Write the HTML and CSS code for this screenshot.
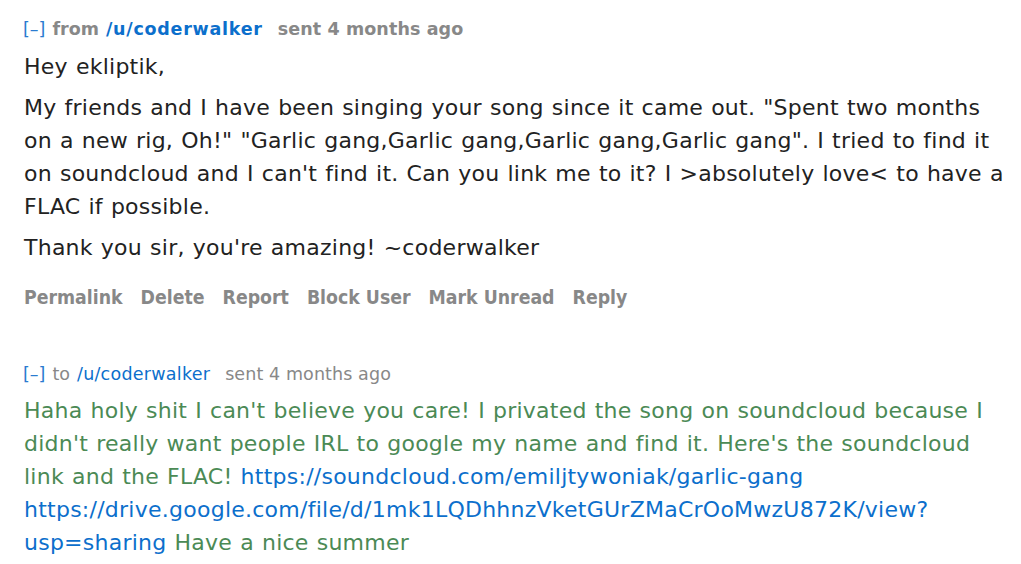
FILE: index.html
```html
<!DOCTYPE html>
<html>
<head>
<meta charset="utf-8">
<link rel="stylesheet" href="styles.css">
</head>
<body>
<div class="thread">
  <div class="message">
    <div class="tagline bold">
      <a class="expand">[–]</a>
      <span class="gray">from</span>
      <a class="author">/u/coderwalker</a>
      <span class="gray time">sent 4 months ago</span>
    </div>
    <div class="body">
      <p>Hey ekliptik,</p>
      <p>My friends and I have been singing your song since it came out. "Spent two months on a new rig, Oh!" "Garlic gang,Garlic gang,Garlic gang,Garlic gang". I tried to find it on soundcloud and I can't find it. Can you link me to it? I &gt;absolutely love&lt; to have a FLAC if possible.</p>
      <p>Thank you sir, you're amazing! ~coderwalker</p>
    </div>
    <ul class="actions">
      <li>Permalink</li>
      <li>Delete</li>
      <li>Report</li>
      <li>Block User</li>
      <li>Mark Unread</li>
      <li>Reply</li>
    </ul>
  </div>
  <div class="message sent">
    <div class="tagline">
      <a class="expand">[–]</a>
      <span class="gray">to</span>
      <a class="author">/u/coderwalker</a>
      <span class="gray time">sent 4 months ago</span>
    </div>
    <div class="body green">
      <p>Haha holy shit I can't believe you care! I privated the song on soundcloud because I didn't really want people IRL to google my name and find it. Here's the soundcloud link and the FLAC! <a>https://soundcloud.com/emiljtywoniak/garlic-gang</a> <a>https://drive.google.com/file/d/1mk1LQDhhnzVketGUrZMaCrOoMwzU872K/view?usp=sharing</a> Have a nice summer</p>
    </div>
  </div>
</div>
</body>
</html>
```
FILE: styles.css
```css
html, body {
  margin: 0;
  padding: 0;
  background: #ffffff;
}
body {
  font-family: "DejaVu Sans", Verdana, sans-serif;
  color: #222222;
}
.thread {
  padding: 17px 12px 0 23px;
}
.message.sent {
  margin-top: 52px;
}
.tagline {
  font-size: 17.5px;
  line-height: 24px;
  display: flex;
  align-items: baseline;
  gap: 7px;
}
.tagline .time {
  margin-left: 8px;
  letter-spacing: 0.1px;
}
.tagline.bold .gray,
.tagline.bold .author {
  font-weight: bold;
}
.tagline .author {
  letter-spacing: 0.25px;
}
.tagline.bold .author {
  letter-spacing: 0.75px;
}
.expand {
  color: #2a7bd0;
  font-weight: normal;
}
.author {
  color: #0c6fcc;
}
.gray {
  color: #888888;
}
.body {
  font-size: 22px;
  line-height: 33px;
  letter-spacing: 0.25px;
  word-spacing: 0.8px;
}
.body p {
  margin: 9px 0 0 1px;
}
.body p + p {
  margin-top: 8px;
}
.sent .body p {
  margin-top: 8px;
}
.body a {
  color: #0c6fcc;
}
.green {
  color: #4b8a55;
}
.actions {
  list-style: none;
  margin: 22px 0 0 1px;
  padding: 0;
  display: flex;
  gap: 18px;
  font-family: "DejaVu Sans Condensed", "DejaVu Sans", sans-serif;
  font-weight: bold;
  font-size: 19.3px;
  line-height: 24px;
  color: #888888;
}
```
